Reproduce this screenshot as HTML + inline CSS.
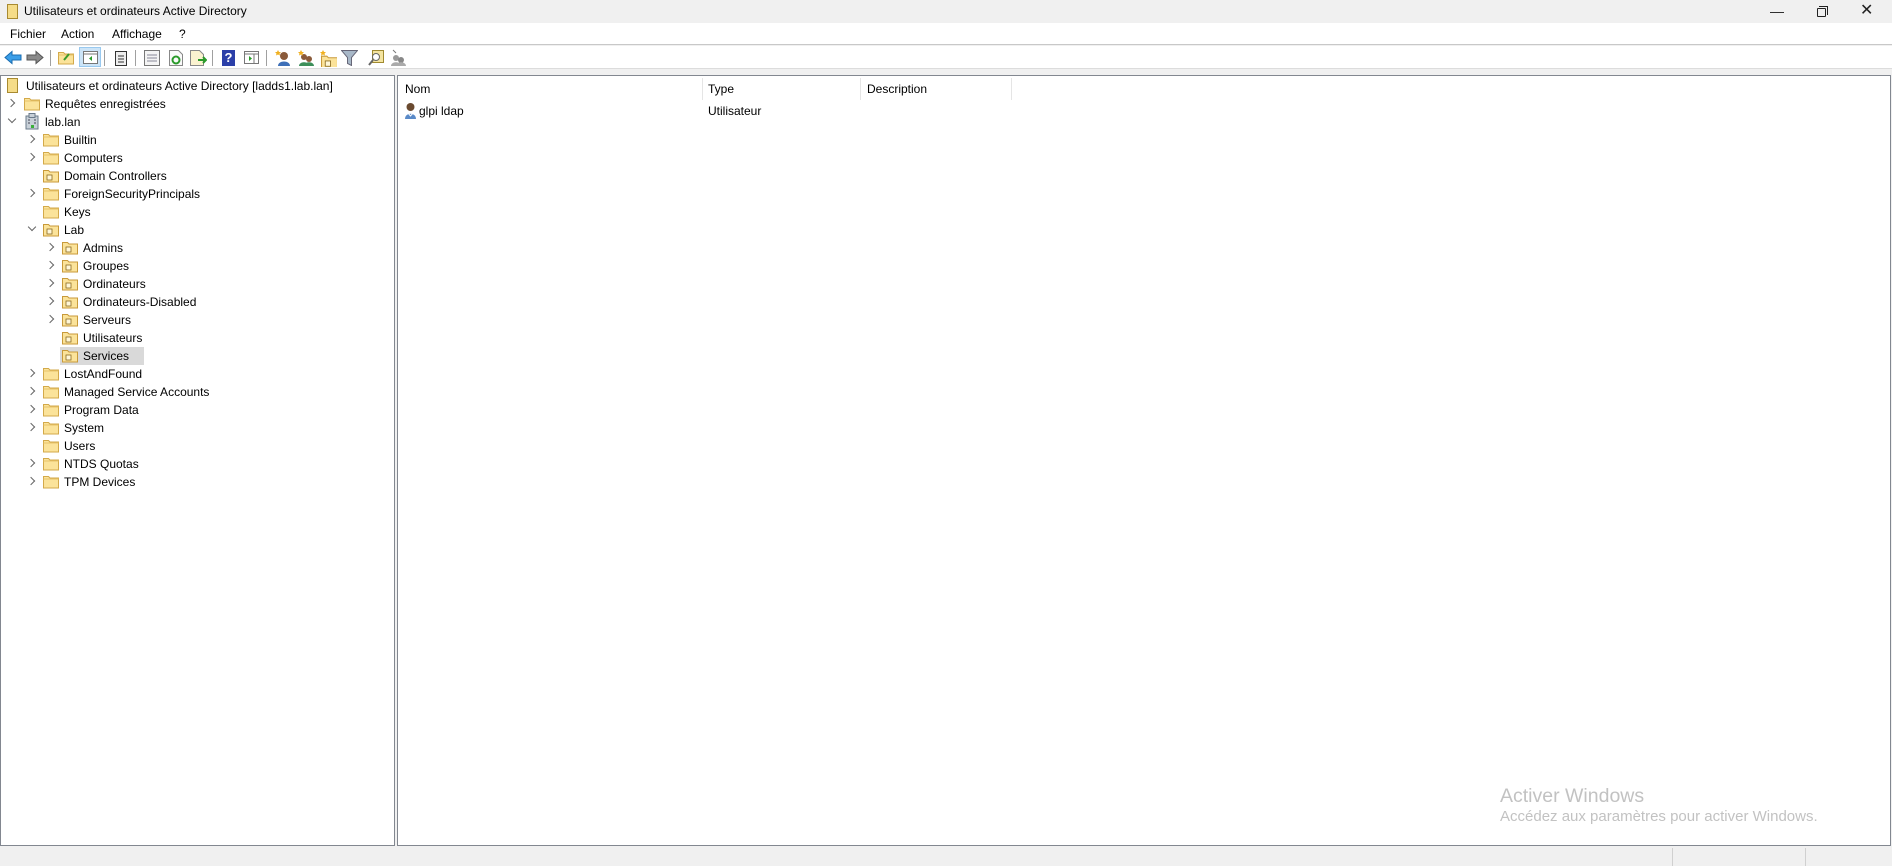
<!DOCTYPE html>
<html><head><meta charset="utf-8"><style>
*{margin:0;padding:0;box-sizing:border-box}
body{width:1892px;height:866px;background:#f0f0f0;font-family:"Liberation Sans",sans-serif;font-size:12px;color:#000;position:relative;overflow:hidden}
.abs{position:absolute}
#title{left:0;top:0;width:1892px;height:23px;background:#f0f0f0}
#menu{left:0;top:23px;width:1892px;height:22px;background:#fff;border-bottom:1px solid #c8c8c8}
#tb{left:0;top:46px;width:1892px;height:23px;background:#fff;border-bottom:1px solid #dcdcdc}
.pane{background:#fff;border:1px solid #828790}
.t{position:absolute;white-space:nowrap;line-height:18px;height:18px}
.sep{position:absolute;top:50px;width:1px;height:16px;background:#a0a0a0}
.chev{position:absolute;width:6px;height:6px;border-right:1.3px solid #666;border-bottom:1.3px solid #666}
.hs{position:absolute;top:78px;width:1px;height:22px;background:#e5e5e5}
.ic{position:absolute}
</style></head><body>
<svg width="0" height="0" style="position:absolute">
<defs>
<symbol id="fold" viewBox="0 0 16 14"><path d="M0.5 1.5h5l1.5 1.5h8.5v10h-15z" fill="#fbe39a" stroke="#d3a94a"/><path d="M0.5 4h15" stroke="#e7c36a"/></symbol>
<symbol id="ou" viewBox="0 0 16 14"><path d="M0.5 1.5h5l1.5 1.5h8.5v10h-15z" fill="#fbe39a" stroke="#c89a3a"/><rect x="4" y="6" width="5" height="5" fill="#fff7d8" stroke="#8a6a20" stroke-width=".8"/></symbol>
</defs></svg>

<div id="title" class="abs"></div>
<div class="abs" style="left:7px;top:4px;width:11px;height:15px;background:#f5dc88;border:1px solid #a88a30"></div>
<div class="t" style="left:24px;top:2px;font-size:12px">Utilisateurs et ordinateurs Active Directory</div>
<div class="t" style="left:1770px;top:2px;font-size:14px;color:#222">&#8212;</div>
<div class="abs" style="left:1817px;top:8px;width:9px;height:9px;border:1px solid #222;border-radius:1px"></div>
<div class="abs" style="left:1819px;top:6px;width:9px;height:9px;border-top:1px solid #222;border-right:1px solid #222"></div>
<div class="t" style="left:1860px;top:2px;font-size:16px;color:#222">&#10005;</div>

<div id="menu" class="abs"></div>
<div class="t" style="left:10px;top:25px">Fichier</div>
<div class="t" style="left:61px;top:25px">Action</div>
<div class="t" style="left:112px;top:25px">Affichage</div>
<div class="t" style="left:179px;top:25px">?</div>

<div id="tb" class="abs"></div>
<svg class="ic" style="left:4px;top:50px" width="18" height="15"><path d="M1 7.5l7-6v3.5h9v5h-9v3.5z" fill="#3a9ee8" stroke="#1a6cb0"/></svg>
<svg class="ic" style="left:26px;top:50px" width="18" height="15"><path d="M17 7.5l-7-6v3.5h-9v5h9v3.5z" fill="#8a8a8a" stroke="#555"/></svg>
<div class="sep" style="left:50px"></div>
<svg class="ic" style="left:58px;top:50px" width="16" height="16"><use href="#fold"/><path d="M6 10l5-6" stroke="#3a9a2a" stroke-width="2"/></svg>
<div class="abs" style="left:79px;top:47px;width:22px;height:20px;background:#cce4f7;border:1px solid #99c9ef"></div>
<svg class="ic" style="left:83px;top:51px" width="15" height="13"><rect x=".5" y=".5" width="14" height="12" fill="#fff" stroke="#777"/><path d="M.5 3h14" stroke="#777"/><path d="M9 5l-3 2.5 3 2.5z" fill="#2a9a2a"/></svg>
<div class="sep" style="left:104px"></div>
<svg class="ic" style="left:115px;top:50px" width="12" height="16"><rect x=".5" y="1.5" width="11" height="14" fill="#eee" stroke="#333"/><path d="M3 6h6M3 9h6M3 12h6" stroke="#333"/></svg>
<div class="sep" style="left:135px"></div>
<svg class="ic" style="left:144px;top:50px" width="16" height="16"><rect x=".5" y=".5" width="15" height="15" fill="#f4f4f4" stroke="#777"/><path d="M3 5h10M3 8h10M3 11h10" stroke="#889"/></svg>
<svg class="ic" style="left:169px;top:50px" width="14" height="16"><path d="M.5.5h9l4 4v11h-13z" fill="#fafafa" stroke="#888"/><circle cx="7" cy="10" r="3.5" fill="none" stroke="#2a9a2a" stroke-width="2"/></svg>
<svg class="ic" style="left:190px;top:50px" width="17" height="16"><path d="M.5.5h9l4 4v11h-13z" fill="#fbf3d0" stroke="#888"/><path d="M8 10h8M13 7l3 3-3 3" stroke="#2a9a2a" stroke-width="2" fill="none"/></svg>
<div class="sep" style="left:212px"></div>
<div class="abs" style="left:222px;top:50px;width:13px;height:16px;background:#2b3fa8;color:#fff;font-weight:bold;font-size:13px;text-align:center;line-height:16px">?</div>
<svg class="ic" style="left:244px;top:51px" width="15" height="13"><rect x=".5" y=".5" width="14" height="12" fill="#fff" stroke="#777"/><path d="M.5 3h14M10 3v10" stroke="#777"/><path d="M5 5l3 2.5-3 2.5z" fill="#2a9a2a"/></svg>
<div class="sep" style="left:266px"></div>
<svg class="ic" style="left:275px;top:49px" width="16" height="18"><circle cx="9" cy="7" r="4" fill="#8a5a3a"/><path d="M3 17c0-6 12-6 12 0z" fill="#3d6fb8"/><path d="M3 1l1 2 2 0-1.5 1.5.5 2-2-1-2 1 .5-2L0 3h2z" fill="#f0b020"/></svg>
<svg class="ic" style="left:298px;top:49px" width="16" height="18"><circle cx="6" cy="8" r="3" fill="#8a5a3a"/><circle cx="11" cy="10" r="3" fill="#8a5a3a"/><path d="M1 17c0-5 10-5 10 0zM6 17c0-5 10-5 10 0z" fill="#3d8f5a"/><path d="M3 1l1 2 2 0-1.5 1.5.5 2-2-1-2 1 .5-2L0 3h2z" fill="#f0b020"/></svg>
<svg class="ic" style="left:320px;top:49px" width="17" height="18"><g transform="translate(1,4)"><use href="#ou"/></g><path d="M3 1l1 2 2 0-1.5 1.5.5 2-2-1-2 1 .5-2L0 3h2z" fill="#f0b020"/></svg>
<svg class="ic" style="left:341px;top:50px" width="17" height="16"><path d="M.5 .5h16l-6 7v8l-4-2v-6z" fill="#a8b8c8" stroke="#667"/></svg>
<svg class="ic" style="left:368px;top:50px" width="16" height="16"><rect x="4.5" y=".5" width="11" height="12" fill="#f4e4a0" stroke="#a08a30"/><circle cx="8" cy="7" r="3.5" fill="#fff" stroke="#666"/><path d="M5 10l-4 5" stroke="#666" stroke-width="2"/></svg>
<svg class="ic" style="left:390px;top:49px" width="16" height="18"><circle cx="6" cy="9" r="3" fill="#999"/><circle cx="11" cy="11" r="3" fill="#888"/><path d="M1 17c0-5 10-5 10 0zM6 17c0-5 10-5 10 0z" fill="#aaa"/><path d="M3 1l3 3" stroke="#777"/></svg>

<div class="abs pane" style="left:0;top:75px;width:395px;height:771px"></div>
<div class="abs pane" style="left:397px;top:75px;width:1494px;height:771px"></div>
<div class="abs" style="left:0;top:846px;width:1892px;height:20px;background:#f0f0f0"></div>
<div class="abs" style="left:1672px;top:848px;width:1px;height:18px;background:#d0d0d0"></div>
<div class="abs" style="left:1805px;top:848px;width:1px;height:18px;background:#d0d0d0"></div>

<div class="abs" style="left:60px;top:347px;width:84px;height:18px;background:#d9d9d9"></div>

<!-- tree -->
<div class="abs" style="left:7px;top:78px;width:11px;height:15px;background:#f5dc88;border:1px solid #a88a30"></div>
<div class="t" style="left:26px;top:77px">Utilisateurs et ordinateurs Active Directory [ladds1.lab.lan]</div>

<div class="chev" style="left:8px;top:100px;transform:rotate(-45deg)"></div>
<svg class="ic" style="left:24px;top:97px" width="16" height="14"><use href="#fold"/></svg>
<div class="t" style="left:45px;top:95px">Requêtes enregistrées</div>

<div class="chev" style="left:9px;top:116px;transform:rotate(45deg)"></div>
<svg class="ic" style="left:24px;top:113px" width="16" height="17"><rect x="2" y="3" width="12" height="13" fill="#c8d0d8" stroke="#6a7a8a"/><rect x="5" y="0.5" width="6" height="4" fill="#c8d0d8" stroke="#6a7a8a"/><path d="M4 7h2M10 7h2M4 10h2M10 10h2" stroke="#445"/><rect x="7" y="12" width="3" height="3" fill="#3ab03a"/></svg>
<div class="t" style="left:45px;top:113px">lab.lan</div>

<div id="tree"></div>

<!-- list -->
<div class="hs" style="left:702px"></div>
<div class="hs" style="left:860px"></div>
<div class="hs" style="left:1011px"></div>
<div class="t" style="left:405px;top:80px">Nom</div>
<div class="t" style="left:708px;top:80px">Type</div>
<div class="t" style="left:867px;top:80px">Description</div>
<svg class="ic" style="left:404px;top:102px" width="13" height="17"><circle cx="6.5" cy="5" r="4" fill="#6a4a30"/><path d="M1 17c0-7 11-7 11 0z" fill="#5a8ac8"/><path d="M4 11l2.5 3 2.5-3" stroke="#fff" fill="none"/></svg>
<div class="t" style="left:419px;top:102px">glpi ldap</div>
<div class="t" style="left:708px;top:102px">Utilisateur</div>

<div class="t" style="left:1500px;top:784px;font-size:19.5px;color:#c2c2c2;line-height:24px;height:24px">Activer Windows</div>
<div class="t" style="left:1500px;top:808px;font-size:15px;color:#c2c2c2">Accédez aux paramètres pour activer Windows.</div>

<script>
var rows=[
[1,1,'fold','Builtin'],[1,1,'fold','Computers'],[1,0,'ou','Domain Controllers'],[1,1,'fold','ForeignSecurityPrincipals'],[1,0,'fold','Keys'],[1,2,'ou','Lab'],
[2,1,'ou','Admins'],[2,1,'ou','Groupes'],[2,1,'ou','Ordinateurs'],[2,1,'ou','Ordinateurs-Disabled'],[2,1,'ou','Serveurs'],[2,0,'ou','Utilisateurs'],[2,0,'ou','Services'],
[1,1,'fold','LostAndFound'],[1,1,'fold','Managed Service Accounts'],[1,1,'fold','Program Data'],[1,1,'fold','System'],[1,0,'fold','Users'],[1,1,'fold','NTDS Quotas'],[1,1,'fold','TPM Devices']];
var h='';
rows.forEach(function(r,i){
 var y=131+i*18;
 var cx=r[0]==1?28:47, ix=r[0]==1?43:62, tx=r[0]==1?64:83;
 if(r[1]==1)h+='<div class="chev" style="left:'+cx+'px;top:'+(y+5)+'px;transform:rotate(-45deg)"></div>';
 if(r[1]==2)h+='<div class="chev" style="left:'+(cx+1)+'px;top:'+(y+3)+'px;transform:rotate(45deg)"></div>';
 h+='<svg class="ic" style="left:'+ix+'px;top:'+(y+2)+'px" width="16" height="14"><use href="#'+r[2]+'"/></svg>';
 h+='<div class="t" style="left:'+tx+'px;top:'+y+'px">'+r[3]+'</div>';
});
document.getElementById('tree').innerHTML=h;
</script>
</body></html>
